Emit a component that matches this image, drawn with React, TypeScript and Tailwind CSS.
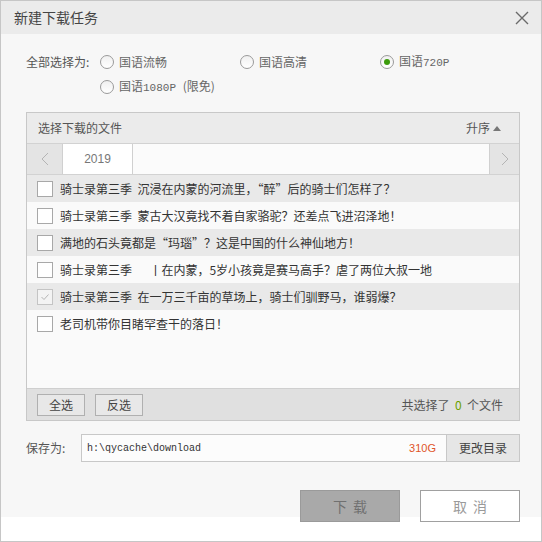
import { ReactNode } from "react";

type FileRow = {
  title: string;
  checked?: boolean;
};

const files: FileRow[] = [
  { title: "骑士录第三季  沉浸在内蒙的河流里，“醉”后的骑士们怎样了？" },
  { title: "骑士录第三季  蒙古大汉竟找不着自家骆驼？还差点飞进沼泽地！" },
  { title: "满地的石头竟都是“玛瑙”？这是中国的什么神仙地方！" },
  { title: "骑士录第三季 　 丨在内蒙，5岁小孩竟是赛马高手？虐了两位大叔一地" },
  { title: "骑士录第三季  在一万三千亩的草场上，骑士们驯野马，谁弱爆？", checked: true },
  { title: "老司机带你目睹罕查干的落日！" },
];

// radio simples, só visual
function Radio({ label, selected }: { label: ReactNode; selected?: boolean }) {
  return (
    <div className="w-[140px] h-[18px] flex items-center gap-[5px]">
      <span className="w-[14px] h-[14px] rounded-full border border-[#9a9a9a] bg-[linear-gradient(to_bottom,#f0f0f0,#ffffff)] flex items-center justify-center">
        {selected && <span className="w-[6px] h-[6px] rounded-full bg-[#3c9c0c]" />}
      </span>
      <span className="text-[12px] text-[#666] leading-none">{label}</span>
    </div>
  );
}

function Checkbox({ checked }: { checked?: boolean }) {
  return (
    <span
      className={
        checked
          ? "w-[16px] h-[16px] border border-[#c4c4c4] bg-[#f3f3f3] flex items-center justify-center"
          : "w-[16px] h-[16px] border border-[#a8a8a8] bg-white"
      }
    >
      {checked && (
        <svg width="10" height="10" viewBox="0 0 10 10">
          <path d="M1.5 5 L4 7.5 L8.5 2.5" fill="none" stroke="#b5b5b5" strokeWidth="1" />
        </svg>
      )}
    </span>
  );
}

function Chevron({ dir }: { dir: "left" | "right" }) {
  return (
    <svg width="8" height="14" viewBox="0 0 8 14">
      <path
        d={dir === "left" ? "M7 1 L1 7 L7 13" : "M1 1 L7 7 L1 13"}
        fill="none"
        stroke="#b4b4b4"
        strokeWidth="1"
      />
    </svg>
  );
}

export default function App() {
  return (
    <div className="w-[542px] h-[542px] border border-[#c6c6c6] flex flex-col font-['Noto_Sans_CJK_SC',sans-serif] bg-[linear-gradient(to_bottom,#f7f7f7_516px,#ffffff_516px)]">
      {/* barra de título */}
      <div className="h-[33px] shrink-0 bg-[#ebebeb] flex items-center justify-between pl-[13px] pr-[12px]">
        <span className="text-[14px] text-[#444]">新建下载任务</span>
        <svg width="14" height="14" viewBox="0 0 14 14">
          <path d="M1 1 L13 13 M13 1 L1 13" stroke="#6a6a6a" strokeWidth="1.4" />
        </svg>
      </div>

      <div className="flex flex-col pl-[25px] pr-[21px]">
        {/* seleção de qualidade */}
        <div className="flex pt-[19px]">
          <span className="w-[74px] h-[18px] leading-[18px] text-[12px] text-[#555]">全部选择为:</span>
          <div className="flex flex-wrap w-[420px] gap-y-[7px]">
            <Radio label="国语流畅" />
            <Radio label="国语高清" />
            <Radio label={<span className="font-['Liberation_Mono',monospace] text-[11px]"><span className="font-['Noto_Sans_CJK_SC',sans-serif] text-[12px]">国语</span>720P</span>} selected />
            <Radio label={<span className="font-['Liberation_Mono',monospace] text-[11px] whitespace-pre"><span className="font-['Noto_Sans_CJK_SC',sans-serif] text-[12px]">国语</span>1080P <span className="font-['Noto_Sans_CJK_SC',sans-serif] text-[12px]">(限免)</span></span>} />
          </div>
        </div>

        {/* painel de arquivos */}
        <div className="mt-[16px] h-[309px] border border-[#c8c8c8] flex flex-col">
          <div className="h-[31px] shrink-0 bg-[#ebebeb] border-b border-[#d2d2d2] flex items-center justify-between pl-[11px] pr-[18px]">
            <span className="text-[12px] text-[#555]">选择下载的文件</span>
            <span className="flex items-center gap-[3px] text-[12px] text-[#555]">
              升序
              <svg width="8" height="5" viewBox="0 0 8 5">
                <path d="M0 5 L4 0 L8 5 Z" fill="#777" />
              </svg>
            </span>
          </div>

          <div className="h-[31px] shrink-0 bg-[#fbfbfb] border-b border-[#d2d2d2] flex">
            <div className="w-[36px] bg-[#e4e4e4] border-r border-[#d0d0d0] flex items-center justify-center">
              <Chevron dir="left" />
            </div>
            <div className="w-[70px] bg-white border-r border-[#d0d0d0] flex items-center justify-center text-[12px] text-[#777] font-['Liberation_Sans',sans-serif]">
              2019
            </div>
            <div className="flex-1" />
            <div className="w-[30px] bg-[#e4e4e4] border-l border-[#d0d0d0] flex items-center justify-center">
              <Chevron dir="right" />
            </div>
          </div>

          <div className="flex flex-col">
            {files.map((f, i) => (
              <div
                key={i}
                className={
                  i % 2 === 0
                    ? "h-[27px] bg-[#e9e9e9] flex items-center pl-[10px] gap-[7px]"
                    : "h-[27px] bg-[#fafafa] flex items-center pl-[10px] gap-[7px]"
                }
              >
                <Checkbox checked={f.checked} />
                <span className="text-[12px] text-[#333] whitespace-pre">{f.title}</span>
              </div>
            ))}
          </div>

          <div className="flex-1 bg-[#fafafa]" />

          <div className="h-[32px] shrink-0 bg-[#e0e0e0] border-t border-[#cfcfcf] flex items-center pl-[10px] pr-[16px]">
            <button className="w-[48px] h-[22px] border border-[#b0b0b0] bg-[#e8e8e8] text-[12px] text-[#444]">全选</button>
            <button className="ml-[10px] w-[48px] h-[22px] border border-[#b0b0b0] bg-[#e8e8e8] text-[12px] text-[#444]">反选</button>
            <span className="ml-auto text-[12px] text-[#555] whitespace-pre">
              共选择了  <span className="text-[#6aa000]">0</span>  个文件
            </span>
          </div>
        </div>

        {/* diretório */}
        <div className="mt-[13px] flex items-center h-[28px]">
          <span className="w-[55px] text-[12px] text-[#555]">保存为:</span>
          <div className="w-[366px] h-[28px] border border-[#c8c8c8] bg-[#fcfcfc] flex items-center pl-[5px] pr-[10px]">
            <span className="font-['Liberation_Mono',monospace] text-[10px] text-[#333]">h:\qycache\download</span>
            <span className="ml-auto text-[11px] text-[#e0552a] font-['Liberation_Sans',sans-serif]">310G</span>
          </div>
          <button className="w-[73px] h-[28px] border border-l-0 border-[#c8c8c8] bg-[#e6e6e6] text-[12px] text-[#444]">更改目录</button>
        </div>

        {/* ações */}
        <div className="mt-[28px] flex justify-end gap-[20px]">
          <button className="w-[100px] h-[32px] border border-[#9a9a9a] bg-[#a9a9a9] text-[14px] text-[#707070] tracking-[6px] pl-[6px]">下载</button>
          <button className="w-[100px] h-[32px] border border-[#a0a0a0] bg-white text-[14px] text-[#9a9a9a] tracking-[6px] pl-[6px]">取消</button>
        </div>
      </div>
    </div>
  );
}
